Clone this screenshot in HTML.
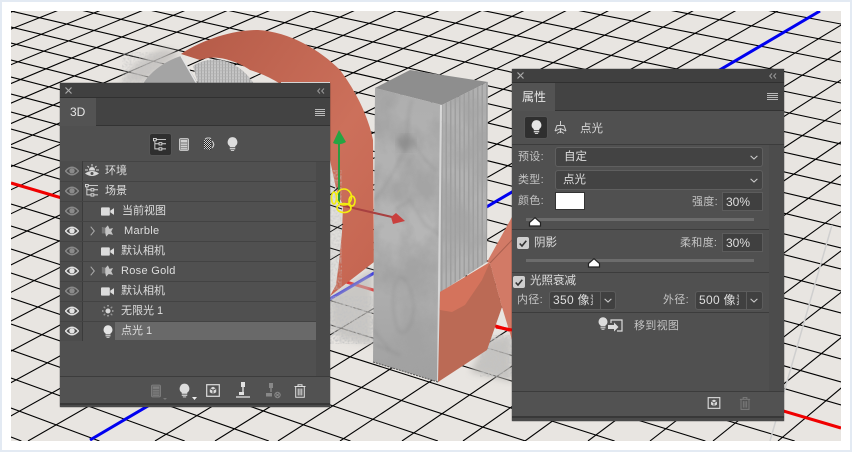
<!DOCTYPE html>
<html><head><meta charset="utf-8">
<style>
html,body{margin:0;padding:0;background:#fff;width:852px;height:452px;overflow:hidden}
body{font-family:"Liberation Sans","Noto Sans CJK SC",sans-serif;color:#dcdcdc}
#wrap{position:absolute;left:0;top:0;width:852px;height:452px;overflow:hidden}
#frame{position:absolute;left:0;top:0;width:852px;height:452px;box-sizing:border-box;border:2px solid #e3eaf3;background:#fff}
#scene{position:absolute;left:0;top:0;display:block}
.p{position:absolute;background:#505050;box-shadow:0 0 1px #222}
.a{position:absolute}
.t{position:absolute;font-size:11px;line-height:14px;white-space:nowrap;color:#dedede}
.d{color:#c4c4c4;letter-spacing:.3px}
.box{position:absolute;background:#434343;border:1px solid #5f5f5f;border-radius:3px;box-sizing:border-box}
.inp{position:absolute;background:#404040;border:1px solid #5c5c5c;box-sizing:border-box}
.hl{position:absolute;height:1px;background:#3c3c3c}
.cb{position:absolute;width:12px;height:12px;background:#cfcfcf;border-radius:2px}
svg.i{position:absolute;overflow:visible}
</style></head><body>
<div id="wrap">
<div id="frame"></div>
<svg id="scene" width="852" height="452" viewBox="0 0 852 452">
<defs>
<clipPath id="c"><rect x="11" y="11" width="830" height="430"/></clipPath>
<filter id="sp" x="0" y="0" width="100%" height="100%"><feTurbulence type="fractalNoise" baseFrequency="0.5" numOctaves="1" seed="4"/><feColorMatrix values="0 0 0 0 .55  0 0 0 0 .55  0 0 0 0 .55  3.2 0 0 0 -1.2"/></filter>
<filter id="mb" x="0" y="0" width="100%" height="100%"><feTurbulence type="fractalNoise" baseFrequency="0.03 0.024" numOctaves="4" seed="9"/><feColorMatrix values="0 0 0 0 .36  0 0 0 0 .36  0 0 0 0 .36  2.8 0 0 0 -1"/></filter>
<filter id="b1"><feGaussianBlur stdDeviation="1.500"/></filter>
<filter id="b3"><feGaussianBlur stdDeviation="3.500"/></filter>
<linearGradient id="front" x1="0" y1="0" x2="0" y2="1"><stop offset="0" stop-color="#aeaeae"/><stop offset=".5" stop-color="#b6b6b6"/><stop offset="1" stop-color="#a0a0a0"/></linearGradient>
<linearGradient id="rose" x1="0" y1="0" x2="1" y2="1"><stop offset="0" stop-color="#b45a47"/><stop offset=".6" stop-color="#cc705b"/><stop offset="1" stop-color="#c4634f"/></linearGradient>
<pattern id="stripes" width="4.500" height="4" patternUnits="userSpaceOnUse"><rect width="4.500" height="4" fill="#b2b2b2"/><rect width="1.500" height="4" fill="#9e9e9e"/></pattern>
<pattern id="knit" width="3" height="3" patternUnits="userSpaceOnUse"><rect width="3" height="3" fill="#c6c6c6"/><rect width="1" height="3" fill="#a8a8a8"/><rect y="1.500" width="3" height=".7" fill="#b0b0b0"/></pattern>
<clipPath id="fc"><path d="M375 88L442 105L439 382L373 362Z"/></clipPath>
<clipPath id="rc"><path d="M442 105L488 82L487 262L439 293Z"/></clipPath>
</defs>
<g clip-path="url(#c)">
<rect x="11" y="11" width="830" height="430" fill="#e8e5e1"/>
<g stroke="#000" stroke-width="1.100">
<line x1="11" y1="-146" x2="841" y2="5"/><line x1="11" y1="-131" x2="841" y2="24"/><line x1="11" y1="-116" x2="841" y2="43"/><line x1="11" y1="-101" x2="841" y2="62"/><line x1="11" y1="-85" x2="841" y2="83"/><line x1="11" y1="-69" x2="841" y2="103"/><line x1="11" y1="-53" x2="841" y2="124"/><line x1="11" y1="-37" x2="841" y2="144"/><line x1="11" y1="-21" x2="841" y2="165"/><line x1="11" y1="-6" x2="841" y2="185"/><line x1="11" y1="11" x2="841" y2="206"/><line x1="11" y1="27" x2="841" y2="227"/><line x1="11" y1="43" x2="841" y2="248"/><line x1="11" y1="60" x2="841" y2="269"/><line x1="11" y1="77" x2="841" y2="291"/><line x1="11" y1="94" x2="841" y2="313"/><line x1="11" y1="112" x2="841" y2="336"/><line x1="11" y1="129" x2="841" y2="359"/><line x1="11" y1="147" x2="841" y2="382"/><line x1="11" y1="165" x2="841" y2="405"/>
<line x1="11" y1="204" x2="794.700" y2="441"/><line x1="11" y1="226" x2="705.400" y2="441"/><line x1="11" y1="249" x2="614.600" y2="441"/><line x1="11" y1="273" x2="525.500" y2="441"/><line x1="11" y1="298" x2="437.900" y2="441"/><line x1="11" y1="324" x2="350.500" y2="441"/><line x1="11" y1="350" x2="268.800" y2="441"/><line x1="11" y1="378" x2="184.700" y2="441"/><line x1="11" y1="408" x2="99.400" y2="441"/><line x1="11" y1="437" x2="21.400" y2="441"/>
<g>
<line x1="2400" y1="-920" x2="-1088" y2="441"/><line x1="2400" y1="-920" x2="-1026" y2="441"/><line x1="2400" y1="-920" x2="-964" y2="441"/><line x1="2400" y1="-920" x2="-902" y2="441"/><line x1="2400" y1="-920" x2="-840" y2="441"/><line x1="2400" y1="-920" x2="-778" y2="441"/><line x1="2400" y1="-920" x2="-716" y2="441"/><line x1="2400" y1="-920" x2="-654" y2="441"/><line x1="2400" y1="-920" x2="-592" y2="441"/><line x1="2400" y1="-920" x2="-530" y2="441"/><line x1="2400" y1="-920" x2="-468" y2="441"/><line x1="2400" y1="-920" x2="-406" y2="441"/><line x1="2400" y1="-920" x2="-344" y2="441"/><line x1="2400" y1="-920" x2="-282" y2="441"/><line x1="2400" y1="-920" x2="-220" y2="441"/><line x1="2400" y1="-920" x2="-158" y2="441"/><line x1="2400" y1="-920" x2="-96" y2="441"/><line x1="2400" y1="-920" x2="-34" y2="441"/><line x1="2400" y1="-920" x2="28" y2="441"/><line x1="2400" y1="-920" x2="155" y2="441"/><line x1="2400" y1="-920" x2="215" y2="441"/><line x1="2400" y1="-920" x2="278" y2="441"/><line x1="2400" y1="-920" x2="340" y2="441"/><line x1="2400" y1="-920" x2="402" y2="441"/><line x1="2400" y1="-920" x2="463" y2="441"/><line x1="2400" y1="-920" x2="525" y2="441"/><line x1="2400" y1="-920" x2="588" y2="441"/><line x1="2400" y1="-920" x2="650" y2="441"/><line x1="2400" y1="-920" x2="713" y2="441"/><line x1="2400" y1="-920" x2="778" y2="441"/>
</g>
</g>
<line x1="770" y1="441" x2="832" y2="225" stroke="#cfcfcf" stroke-width="1.500"/>
<line x1="11" y1="183" x2="841" y2="428" stroke="#f00000" stroke-width="3"/>
<line x1="90" y1="440" x2="820" y2="11" stroke="#0000f0" stroke-width="3"/>
<g>
<path d="M330 296L373 268L373 345L340 338L330 325Z" fill="#bdbbb8" filter="url(#b3)" opacity=".7"/>
<rect x="330" y="296" width="43" height="48" filter="url(#sp)" opacity=".8"/>
<path d="M487 340L512 335L512 382L470 372Z" fill="#bdbbb8" filter="url(#b3)" opacity=".8"/>
<rect x="480" y="335" width="32" height="42" filter="url(#sp)" opacity=".8"/>
<path d="M120 83C130 68 143 55 165 48L181 54L143 83Z" fill="#c2c0bd" filter="url(#b3)" opacity=".8"/>
<rect x="122" y="52" width="40" height="31" filter="url(#sp)" opacity=".45"/>
<line x1="330" y1="207" x2="338" y2="203" stroke="#1a4fb0" stroke-width="2"/>
</g>
<path d="M143 84C150 72 165 61 181 56L196 80L197 84Z" fill="#a4a4a4"/>
<path d="M181 56L197 84" stroke="#e4e4e4" stroke-width="1.500"/>
<path d="M193 66C215 52 240 62 254 84L198 84Z" fill="url(#knit)"/>
<path d="M181 54C205 38 235 30 258 30C290 32 320 50 340 70C355 90 368 115 373 140L374 262L330 296L300 310L300 100C280 80 262 74 250 70C235 60 215 54 200 60Z" fill="url(#rose)"/>
<path d="M330 160L337 193L343 205L342 232L339 262L336 285L330 296Z" fill="#e0dedb"/>
<rect x="330" y="170" width="12" height="120" filter="url(#sp)" opacity=".45"/>
<g stroke="#151515" stroke-width="1"><path d="M330 205L342 209M330 225L342 229M330 248L340 251M330 186L335 188M330 195L340 186M330 232L343 224M330 260L340 254" fill="none"/></g>
<path d="M375 88L410 70L488 82L442 105Z" fill="#8e8e8e"/>
<path d="M442 105L488 82L487 262L439 293Z" fill="url(#stripes)"/>
<rect x="439" y="82" width="49" height="211" filter="url(#mb)" clip-path="url(#rc)" opacity=".75"/>
<path d="M375 88L442 105L439 382L373 362Z" fill="url(#front)"/>
<rect x="373" y="88" width="69" height="294" filter="url(#mb)" clip-path="url(#fc)" opacity=".9"/>
<g clip-path="url(#fc)" fill="none" stroke="#848484" stroke-width="1" filter="url(#b1)" opacity=".6">
<path d="M373 200C385 190 395 170 405 150C410 135 405 120 412 100"/>
<path d="M405 150L398 138M412 140L425 160L436 170M395 210L410 200L425 225L440 235"/>
<path d="M395 285C400 270 408 280 412 295C418 320 405 340 398 330C392 315 392 295 395 285Z"/>
<path d="M376 345L400 355M373 330L390 350"/>
</g>
<ellipse cx="406" cy="143" rx="9" ry="8" fill="#808080" filter="url(#b3)" clip-path="url(#fc)" opacity=".55"/>
<path d="M441 105L438 382" stroke="#d8d8d8" stroke-width="2"/>
<path d="M373 362L438 382" stroke="#555" stroke-width="1" stroke-dasharray="2 1"/>
<path d="M440 292L483 270L490 263L502 307L487 350L438 382Z" fill="#bb6a55"/>
<path d="M440 292L490 262L482 280L465 305L452 312L440 310Z" fill="#d4735c"/>
<path d="M487 262L512 217L512 340L502 307L490 263Z" fill="#d27a66"/>
<path d="M490 263L512 240" stroke="#a9604f" stroke-width="1"/>
<line x1="496" y1="327" x2="512" y2="330" stroke="#f00000" stroke-width="3"/>
<line x1="339" y1="204" x2="339" y2="142" stroke="#2f9a40" stroke-width="2"/>
<path d="M339 130L333 143Q339 146 346 142Z" fill="#26a543"/>
<line x1="340" y1="205" x2="392" y2="217" stroke="#a84040" stroke-width="2"/>
<path d="M396 213L405 221L393 224L391 217Z" fill="#c9403e"/>
<g fill="none" stroke="#f4ee10" stroke-width="1.600">
<ellipse cx="344" cy="197" rx="7.500" ry="8"/><ellipse cx="344" cy="208" rx="7" ry="4.500"/><ellipse cx="334" cy="198" rx="2.500" ry="6"/><ellipse cx="352" cy="201" rx="3" ry="5"/>
</g>
<line x1="281" y1="82.500" x2="330" y2="82.500" stroke="#fff"/>
</g>
</svg>

<svg width="0" height="0" style="position:absolute"><defs>
<symbol id="eye" viewBox="0 0 14 10"><path d="M.5 5Q7-2.500 13.500 5Q7 12.500.5 5Z" fill="none" stroke="currentColor" stroke-width="1.400"/><circle cx="7" cy="4.800" r="2.700" fill="currentColor"/></symbol>
<symbol id="cam" viewBox="0 0 14 9"><rect width="9.500" height="9" rx="1" fill="#dcdcdc"/><path d="M10 3.500L14 .8V8.200L10 5.500Z" fill="#dcdcdc"/></symbol>
<symbol id="mat" viewBox="0 0 14 13"><path d="M8 0L10 4L14 3L12 7L14 11L9 10L6 13L5 9L1 9L3 5L1 2L5 3Z" fill="#c4c4c4"/><path d="M1 2L5 3L5 9L1 9Z" fill="#777"/></symbol>
<symbol id="bulb" viewBox="0 0 12 15"><path d="M6 0A5.400 5.400 0 0 1 9 9.800V11H3V9.800A5.400 5.400 0 0 1 6 0Z" fill="currentColor"/><rect x="3" y="12" width="6" height="1.300" fill="currentColor"/><rect x="4.200" y="14" width="3.600" height="1" fill="currentColor"/></symbol>
<symbol id="calc" viewBox="0 0 11 14"><rect x=".5" y=".5" width="10" height="13" rx="1.500" fill="currentColor" opacity=".45"/><rect x=".5" y=".5" width="10" height="13" rx="1.500" fill="none" stroke="currentColor"/><rect x="2" y="2" width="7" height="2.600" fill="currentColor"/><path d="M2 6h7v1.400H2zM2 8.500h7v1.400H2zM2 11h7v1.400H2z" fill="currentColor"/></symbol>
<symbol id="tree" viewBox="0 0 14 14"><g fill="none" stroke="currentColor" stroke-width="1"><rect x=".5" y=".5" width="3" height="2.500"/><rect x="6.500" y="5" width="3" height="2.500"/><rect x="6.500" y="10.500" width="3" height="2.500"/><path d="M2 3V11.700H6.500M2 6.200H6.500M3.500 1.700H14M9.500 6.200H14M9.500 11.700H14"/></g></symbol>
<symbol id="cube" viewBox="0 0 14 13"><rect x=".7" y=".7" width="12.600" height="11.600" fill="none" stroke="currentColor" stroke-width="1.200"/><path d="M7 2.800L10.200 4.500V8.200L7 10L3.800 8.200V4.500Z" fill="currentColor"/><path d="M7 6.200V10M3.800 4.500L7 6.200L10.200 4.500" stroke="#505050" fill="none"/></symbol>
<symbol id="trash" viewBox="0 0 12 14"><path d="M.5 2.500H11.500M4 2.500V.7H8V2.500M1.700 2.500V13.300H10.300V2.500M4.200 4.500V11.500M6 4.500V11.500M7.800 4.500V11.500" fill="none" stroke="currentColor" stroke-width="1"/></symbol>
<symbol id="chev" viewBox="0 0 9 5"><path d="M.7.7L4.500 4.200L8.300.7" fill="none" stroke="currentColor" stroke-width="1.200"/></symbol>
<symbol id="thumb" viewBox="0 0 14 10"><path d="M7 .7L12.500 5.500V9H1.500V5.500Z" fill="#fff" stroke="#222" stroke-width="1.200"/></symbol>
<pattern id="chk" width="2" height="2" patternUnits="userSpaceOnUse"><rect width="2" height="2" fill="#d0d0d0"/><rect width="1" height="1" fill="#222"/><rect x="1" y="1" width="1" height="1" fill="#222"/></pattern>
</defs></svg>

<!-- 3D PANEL -->
<div class="p" style="left:60px;top:83px;width:270px;height:324px;color:#dcdcdc">
 <div class="a" style="left:0;top:0;width:270px;height:14px;background:#404040;border-bottom:1px solid #303030"></div>
 <svg class="i" style="left:5px;top:4px" width="7" height="7"><path d="M.5.5L6.500 6.500M6.500.5L.5 6.500" stroke="#aaa" stroke-width="1.200"/></svg>
 <svg class="i" style="left:257px;top:5px" width="8" height="6"><path d="M3 .5L.7 3L3 5.500M7 .5L4.700 3L7 5.500" fill="none" stroke="#999"/></svg>
 <div class="a" style="left:0;top:15px;width:270px;height:27px;background:#434343;border-bottom:1px solid #333"></div>
 <div class="a" style="left:0;top:15px;width:36px;height:28px;background:#535353"></div>
 <div class="t" style="left:10px;top:22px;font-size:12px;color:#e6e6e6">3D</div>
 <svg class="i" style="left:255px;top:26px" width="10" height="7"><path d="M0 .5H10M0 2.500H10M0 4.500H10M0 6.500H10" stroke="#bbb"/></svg>
 <div class="a" style="left:89px;top:50px;width:23px;height:23px;background:#2f2f2f;border:1px solid #555;border-radius:3px;box-sizing:border-box"></div>
 <svg class="i" style="left:93px;top:55px;color:#d8d8d8" width="13" height="13"><use href="#tree"/></svg>
 <svg class="i" style="left:119px;top:55px;color:#cfcfcf" width="10" height="13"><use href="#calc"/></svg>
 <svg class="i" style="left:143px;top:55px" width="13" height="13"><path d="M1 2L8 1V12L1 11Z" fill="url(#chk)"/><path d="M9 3Q12.500 6.500 9 10" fill="none" stroke="#ccc" stroke-width="1.200"/><path d="M2 1L4 0H7L8 1" fill="none" stroke="#ccc"/></svg>
 <svg class="i" style="left:167px;top:54px;color:#dcdcdc" width="11" height="14"><use href="#bulb"/></svg>
 <div class="a" style="left:0;top:78px;width:270px;height:1px;background:#444"></div>
 <div class="a" style="left:256px;top:79px;width:14px;height:214px;background:#4a4a4a"></div>
 <div class="a" style="left:0;top:78px;width:22px;height:180px;background:#4c4c4c"></div>
 <div class="a" style="left:22px;top:78px;width:1px;height:180px;background:#3b3b3b"></div>
 <div class="hl" style="left:0;top:98px;width:256px;background:#434343"></div>
 <div class="hl" style="left:0;top:118px;width:256px;background:#434343"></div>
 <div class="hl" style="left:0;top:138px;width:256px;background:#434343"></div>
 <div class="hl" style="left:0;top:158px;width:256px;background:#434343"></div>
 <div class="hl" style="left:0;top:178px;width:256px;background:#434343"></div>
 <div class="hl" style="left:0;top:198px;width:256px;background:#434343"></div>
 <div class="hl" style="left:0;top:218px;width:256px;background:#434343"></div>
 <div class="hl" style="left:0;top:238px;width:256px;background:#434343"></div>
 <div class="a" style="left:55px;top:239px;width:201px;height:18px;background:#696969"></div>
 <svg class="i" style="left:5px;top:83px;color:#898989" width="14" height="10"><use href="#eye"/></svg>
 <svg class="i" style="left:5px;top:103px;color:#898989" width="14" height="10"><use href="#eye"/></svg>
 <svg class="i" style="left:5px;top:123px;color:#898989" width="14" height="10"><use href="#eye"/></svg>
 <svg class="i" style="left:5px;top:143px;color:#e2e2e2" width="14" height="10"><use href="#eye"/></svg>
 <svg class="i" style="left:5px;top:163px;color:#898989" width="14" height="10"><use href="#eye"/></svg>
 <svg class="i" style="left:5px;top:183px;color:#e2e2e2" width="14" height="10"><use href="#eye"/></svg>
 <svg class="i" style="left:5px;top:203px;color:#898989" width="14" height="10"><use href="#eye"/></svg>
 <svg class="i" style="left:5px;top:223px;color:#e2e2e2" width="14" height="10"><use href="#eye"/></svg>
 <svg class="i" style="left:5px;top:243px;color:#e2e2e2" width="14" height="10"><use href="#eye"/></svg>
 <svg class="i" style="left:25px;top:81px" width="14" height="14"><g stroke="#d8d8d8" fill="none"><path d="M7 0V2.500M2.500 2L4 3.500M11.500 2L10 3.500M0 6H3M14 6H11"/><path d="M4.500 6A2.500 2.500 0 0 1 9.500 6Z" fill="#d8d8d8"/><path d="M0 9.500Q7 4.500 14 9.500Q7 14.500 0 9.500Z" fill="#d8d8d8" stroke="none"/><circle cx="7" cy="9.500" r="1.500" fill="#505050" stroke="none"/></g></svg>
 <svg class="i" style="left:25px;top:101px;color:#d8d8d8" width="13" height="13"><use href="#tree"/></svg>
 <svg class="i" style="left:41px;top:124px" width="13" height="9"><use href="#cam"/></svg>
 <svg class="i" style="left:41px;top:164px" width="13" height="9"><use href="#cam"/></svg>
 <svg class="i" style="left:41px;top:204px" width="13" height="9"><use href="#cam"/></svg>
 <svg class="i" style="left:41px;top:142px" width="12" height="12"><use href="#mat"/></svg>
 <svg class="i" style="left:41px;top:182px" width="12" height="12"><use href="#mat"/></svg>
 <svg class="i" style="left:30px;top:143px" width="5" height="10"><path d="M.7.7L4.300 5L.7 9.300" fill="none" stroke="#aaa"/></svg>
 <svg class="i" style="left:30px;top:183px" width="5" height="10"><path d="M.7.7L4.300 5L.7 9.300" fill="none" stroke="#aaa"/></svg>
 <svg class="i" style="left:42px;top:222px" width="12" height="12"><g stroke="#d8d8d8" fill="none"><circle cx="6" cy="6" r="2" fill="#d8d8d8"/><path d="M6 0V2M6 10V12M0 6H2M10 6H12M1.800 1.800L3.200 3.200M8.800 8.800L10.200 10.200M1.800 10.200L3.200 8.800M8.800 3.200L10.200 1.800" stroke-dasharray="1 .5"/></g></svg>
 <svg class="i" style="left:43px;top:242px;color:#e4e4e4" width="10" height="13"><use href="#bulb"/></svg>
 <div class="t" style="left:45px;top:81px">环境</div>
 <div class="t" style="left:45px;top:101px">场景</div>
 <div class="t" style="left:62px;top:121px">当前视图</div>
 <div class="t" style="left:64px;top:141px;letter-spacing:.3px">Marble</div>
 <div class="t" style="left:61px;top:161px">默认相机</div>
 <div class="t" style="left:61px;top:181px;letter-spacing:.3px">Rose Gold</div>
 <div class="t" style="left:61px;top:201px">默认相机</div>
 <div class="t" style="left:61px;top:221px">无限光 1</div>
 <div class="t" style="left:61px;top:241px">点光 1</div>
 <div class="a" style="left:0;top:293px;width:270px;height:1px;background:#3c3c3c"></div>
 <div class="a" style="left:0;top:294px;width:270px;height:26px;background:#525252"></div>
 <div class="a" style="left:0;top:320px;width:270px;height:2px;background:#383838"></div>
 <div class="a" style="left:0;top:322px;width:270px;height:2px;background:#4a4a4a"></div>
 <svg class="i" style="left:91px;top:301px;color:#7e7e7e" width="10" height="14"><use href="#calc"/></svg>
 <svg class="i" style="left:103px;top:315px" width="4" height="2"><path d="M0 0H4L2 2Z" fill="#777"/></svg>
 <svg class="i" style="left:119px;top:300px;color:#dcdcdc" width="11" height="15"><use href="#bulb"/></svg>
 <svg class="i" style="left:132px;top:314px" width="5" height="3"><path d="M0 0H5L2.500 3Z" fill="#eee"/></svg>
 <svg class="i" style="left:146px;top:301px;color:#dcdcdc" width="14" height="13"><use href="#cube"/></svg>
 <svg class="i" style="left:176px;top:299px" width="14" height="16"><path d="M5 0H9V5H5ZM6.300 5H7.700V10H6.300Z" fill="#e2e2e2"/><path d="M3 10H8V13H3Z" fill="#e2e2e2"/><path d="M0 15H14" stroke="#e2e2e2" stroke-width="1.300"/></svg>
 <svg class="i" style="left:205px;top:300px" width="16" height="15"><path d="M4 0H8V5H4ZM5.300 5H6.700V9H5.300Z" fill="#888"/><path d="M1 10H7V13.500H1ZM1 13.500H9" fill="#888"/><circle cx="12.500" cy="12" r="2.700" fill="none" stroke="#888"/><path d="M11 10.500L14 13.500M14 10.500L11 13.500" stroke="#888"/></svg>
 <svg class="i" style="left:234px;top:301px;color:#e0e0e0" width="12" height="14"><use href="#trash"/></svg>
</div>

<!-- PROPERTIES PANEL -->
<div class="p" style="left:512px;top:69px;width:272px;height:352px">
 <div class="a" style="left:0;top:0;width:272px;height:13px;background:#404040;border-bottom:1px solid #303030"></div>
 <svg class="i" style="left:5px;top:3px" width="7" height="7"><path d="M.5.5L6.500 6.500M6.500.5L.5 6.500" stroke="#aaa" stroke-width="1.200"/></svg>
 <svg class="i" style="left:257px;top:4px" width="8" height="6"><path d="M3 .5L.7 3L3 5.500M7 .5L4.700 3L7 5.500" fill="none" stroke="#999"/></svg>
 <div class="a" style="left:0;top:14px;width:272px;height:27px;background:#434343;border-bottom:1px solid #333"></div>
 <div class="a" style="left:0;top:14px;width:43px;height:28px;background:#535353"></div>
 <div class="t" style="left:10px;top:21px;font-size:12px;color:#e6e6e6">属性</div>
 <svg class="i" style="left:255px;top:24px" width="11" height="7"><path d="M0 .5H11M0 2.500H11M0 4.500H11M0 6.500H11" stroke="#bbb"/></svg>
 <div class="a" style="left:12px;top:47px;width:24px;height:23px;background:#2f2f2f;border:1px solid #555;border-radius:3px;box-sizing:border-box"></div>
 <svg class="i" style="left:19px;top:51px;color:#e6e6e6" width="11" height="14"><use href="#bulb"/></svg>
 <svg class="i" style="left:42px;top:52px" width="13" height="13"><g fill="none" stroke="#cfcfcf"><path d="M6.500 0V4M1 10L6.500 7.500L12 10M1 10L3 4.500H10L12 10M6.500 7.500V12M3 12.500L6.500 10.500L10 12.500"/></g></svg>
 <div class="t" style="left:68px;top:53px;color:#d8d8d8;font-size:11.500px">点光</div>
 <div class="a" style="left:0;top:75px;width:272px;height:1px;background:#3c3c3c"></div>
 <div class="a" style="left:257px;top:76px;width:15px;height:246px;background:#4c4c4c"></div>
 <div class="t d" style="left:6px;top:81px">预设:</div>
 <div class="box" style="left:43px;top:78px;width:208px;height:20px"></div>
 <div class="t" style="left:52px;top:81px;font-size:11.500px">自定</div>
 <svg class="i" style="left:238px;top:86px;color:#ccc" width="8" height="5"><use href="#chev"/></svg>
 <div class="t d" style="left:6px;top:104px">类型:</div>
 <div class="box" style="left:43px;top:101px;width:208px;height:20px"></div>
 <div class="t" style="left:51px;top:104px;font-size:11.500px">点光</div>
 <svg class="i" style="left:238px;top:109px;color:#ccc" width="8" height="5"><use href="#chev"/></svg>
 <div class="t d" style="left:6px;top:125px">颜色:</div>
 <div class="a" style="left:43px;top:123px;width:30px;height:18px;background:#fff;border:1px solid #333;box-sizing:border-box"></div>
 <div class="t d" style="left:180px;top:126px">强度:</div>
 <div class="inp" style="left:210px;top:123px;width:41px;height:19px"></div>
 <div class="t" style="left:214px;top:126px;font-size:12px">30%</div>
 <div class="a" style="left:14px;top:149px;width:228px;height:3px;background:#6c6c6c"></div>
 <svg class="i" style="left:16px;top:148px" width="14" height="10"><use href="#thumb"/></svg>
 <div class="a" style="left:0;top:160px;width:257px;height:1px;background:#3c3c3c"></div>
 <div class="cb" style="left:5px;top:168px"></div>
 <svg class="i" style="left:7px;top:171px" width="8" height="7"><path d="M.7 3.500L3 6L7.300 .8" fill="none" stroke="#333" stroke-width="1.600"/></svg>
 <div class="t" style="left:22px;top:167px;font-size:11.500px">阴影</div>
 <div class="t d" style="left:168px;top:167px">柔和度:</div>
 <div class="inp" style="left:210px;top:164px;width:41px;height:19px"></div>
 <div class="t" style="left:214px;top:167px;font-size:12px">30%</div>
 <div class="a" style="left:14px;top:190px;width:228px;height:3px;background:#6c6c6c"></div>
 <svg class="i" style="left:75px;top:189px" width="14" height="10"><use href="#thumb"/></svg>
 <div class="a" style="left:0;top:203px;width:257px;height:1px;background:#3c3c3c"></div>
 <div class="cb" style="left:1px;top:207px"></div>
 <svg class="i" style="left:3px;top:210px" width="8" height="7"><path d="M.7 3.500L3 6L7.300 .8" fill="none" stroke="#333" stroke-width="1.600"/></svg>
 <div class="t" style="left:18px;top:205px;font-size:11.500px">光照衰减</div>
 <div class="t d" style="left:5px;top:224px">内径:</div>
 <div class="inp" style="left:37px;top:222px;width:67px;height:19px;border-radius:3px"></div>
 <div class="a" style="left:88px;top:222px;width:1px;height:19px;background:#5c5c5c"></div>
 <div class="t" style="left:41px;top:224px;font-size:12px;letter-spacing:.3px;width:40px;overflow:hidden">350 像素</div>
 <svg class="i" style="left:92px;top:229px;color:#ccc" width="8" height="5"><use href="#chev"/></svg>
 <div class="t d" style="left:151px;top:224px">外径:</div>
 <div class="inp" style="left:183px;top:222px;width:68px;height:19px;border-radius:3px"></div>
 <div class="a" style="left:234px;top:222px;width:1px;height:19px;background:#5c5c5c"></div>
 <div class="t" style="left:187px;top:224px;font-size:12px;letter-spacing:.3px;width:40px;overflow:hidden">500 像素</div>
 <svg class="i" style="left:238px;top:229px;color:#ccc" width="8" height="5"><use href="#chev"/></svg>
 <div class="a" style="left:0;top:243px;width:257px;height:1px;background:#3c3c3c"></div>
 <svg class="i" style="left:86px;top:248px;color:#dcdcdc" width="10" height="13"><use href="#bulb"/></svg>
 <svg class="i" style="left:96px;top:250px" width="15" height="14"><path d="M3 4V1H14V12H9" fill="none" stroke="#dcdcdc" stroke-width="1.200"/><path d="M0 6H6V3.500L10.500 8L6 12.500V10H0Z" fill="#dcdcdc"/></svg>
 <div class="t d" style="left:122px;top:250px">移到视图</div>
 <div class="a" style="left:0;top:322px;width:272px;height:1px;background:#3c3c3c"></div>
 <div class="a" style="left:0;top:323px;width:272px;height:24px;background:#525252"></div>
 <div class="a" style="left:0;top:347px;width:272px;height:2px;background:#383838"></div>
 <div class="a" style="left:0;top:349px;width:272px;height:3px;background:#4a4a4a"></div>
 <svg class="i" style="left:195px;top:328px;color:#dcdcdc" width="14" height="12"><use href="#cube"/></svg>
 <svg class="i" style="left:227px;top:328px;color:#7c7c7c" width="12" height="13"><use href="#trash"/></svg>
</div>
</div>
</body></html>
